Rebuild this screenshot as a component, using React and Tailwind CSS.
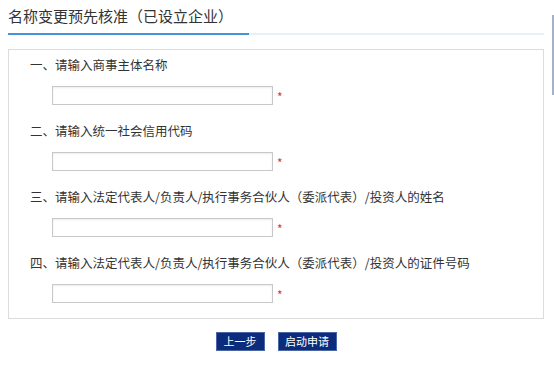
import React from 'react';

const fields = [
    '一、请输入商事主体名称',
    '二、请输入统一社会信用代码',
    '三、请输入法定代表人/负责人/执行事务合伙人（委派代表）/投资人的姓名',
    '四、请输入法定代表人/负责人/执行事务合伙人（委派代表）/投资人的证件号码',
];

const App = () => {
    return (
        <div
            className="relative w-[554px] h-[376px] bg-white overflow-hidden text-[#333]"
            style={{ fontFamily: '"Noto Sans CJK SC", "Noto Sans", sans-serif' }}
        >
            {/* scrollbar thumb */}
            <div className="absolute left-[552px] top-[15px] w-[2px] h-[80px] bg-[#a3b1cf]" />

            <div className="pl-[8px] pr-[10px] pt-[6px]">
                <h2 className="text-[15px] leading-[20px] font-normal text-[#333]">
                    名称变更预先核准（已设立企业）
                </h2>
                <div className="mt-[7px] h-[2px] bg-[#e5f0fb]">
                    <div className="w-[241px] h-[2px] bg-[#4a92d6]" />
                </div>

                <div className="mt-[14px] border border-[#dcdcdc] pl-[21px] pt-[5px] pb-[15px]">
                    <div className="flex flex-col gap-[16px]">
                        {fields.map((label) => (
                            <div key={label}>
                                <div className="text-[12.5px] leading-[20px] whitespace-nowrap">{label}</div>
                                <div className="mt-[11px] ml-[22px] flex items-start">
                                    <input
                                        type="text"
                                        className="w-[221px] h-[19px] border border-[#c8c8c8] bg-white shadow-[inset_0_1px_2px_rgba(0,0,0,0.08)] outline-none"
                                    />
                                    <span className="ml-[4px] mt-[5px] text-[12px] leading-[12px] text-[#e2352f]">*</span>
                                </div>
                            </div>
                        ))}
                    </div>
                </div>

                <div className="mt-[13px] flex justify-center gap-[13px]">
                    <button className="w-[49px] h-[19px] bg-[#0b2c7c] border border-[#4d66a4] text-white text-[11px] leading-[17px]">
                        上一步
                    </button>
                    <button className="w-[59px] h-[19px] bg-[#0b2c7c] border border-[#4d66a4] text-white text-[11px] leading-[17px]">
                        启动申请
                    </button>
                </div>
            </div>
        </div>
    );
};

export default App;
